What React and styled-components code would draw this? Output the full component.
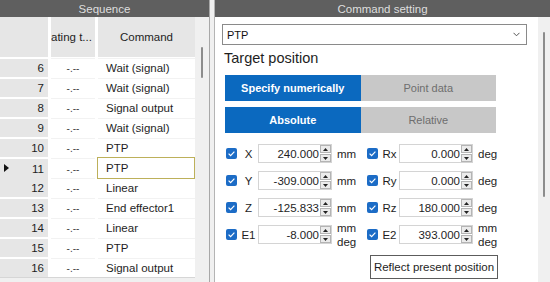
import React from "react";
import styled, { createGlobalStyle } from "styled-components";

const Global = createGlobalStyle`
  html, body {
    margin: 0;
    padding: 0;
    width: 550px;
    height: 282px;
    overflow: hidden;
    background: #f0f0f0;
    font-family: "Liberation Sans", Arial, sans-serif;
    font-size: 11px;
    color: #1e1e1e;
  }
  * { box-sizing: border-box; }
`;

const Root = styled.div`
  display: flex;
  width: 550px;
  height: 282px;
  background: #f0f0f0;
`;

const LeftPanel = styled.div`
  width: 210px;
  display: flex;
  flex-direction: column;
  border-right: 1px solid #a8a8a8;
  background: #fff;
`;

const Divider = styled.div`
  width: 4px;
  display: flex;
  flex-direction: column;
`;

const DividerTop = styled.div`
  height: 17px;
  background: #f0f0f0;
`;

const RightPanel = styled.div`
  flex: 1;
  display: flex;
  flex-direction: column;
  border-left: 1px solid #b4b4b4;
  background: #fff;
`;

const PanelHeader = styled.div`
  height: 17px;
  flex: none;
  background: #5f5f5f;
  color: #dedede;
  font-size: 11.5px;
  display: flex;
  align-items: center;
  justify-content: center;
`;

const TableArea = styled.div`
  flex: 1;
  display: flex;
  min-height: 0;
`;

const Table = styled.div`
  width: 195px;
  display: flex;
  flex-direction: column;
  background: #fff;
  overflow: hidden;
`;

const HeaderRow = styled.div`
  display: grid;
  grid-template-columns: 48px 44px 97px;
  column-gap: 3px;
  height: 40px;
  flex: none;
`;

const HeaderCell = styled.div`
  background: #e6e6e6;
  display: flex;
  align-items: center;
  justify-content: ${(p) => p.$align || "center"};
  font-size: 11.5px;
  color: #1e1e1e;
  overflow: hidden;
  white-space: nowrap;
`;

const Row = styled.div`
  display: grid;
  grid-template-columns: 48px 44px 97px;
  column-gap: 3px;
  height: 20px;
  flex: none;
`;

const NumCell = styled.div`
  margin-top: 2px;
  background: #e6e6e6;
  position: relative;
  display: flex;
  align-items: center;
  justify-content: flex-end;
  padding-right: 4px;
  font-size: 11.5px;
`;

const Marker = styled.span`
  position: absolute;
  left: 4px;
  top: 5px;
  width: 0;
  height: 0;
  border-top: 4px solid transparent;
  border-bottom: 4px solid transparent;
  border-left: 5px solid #111;
`;

const TimeCell = styled.div`
  margin-top: 1px;
  border-top: 1px solid #f2f2f2;
  display: flex;
  align-items: center;
  justify-content: center;
  color: #444;
  font-size: 10px;
`;

const CmdCell = styled.div`
  margin-top: ${(p) => (p.$selected ? "0" : "1px")};
  height: ${(p) => (p.$selected ? "22px" : "auto")};
  border: ${(p) => (p.$selected ? "1px solid #bdb05a" : "none")};
  border-top: ${(p) => (p.$selected ? "1px solid #bdb05a" : "1px solid #f2f2f2")};
  margin-left: ${(p) => (p.$selected ? "-1px" : "0")};
  position: relative;
  z-index: ${(p) => (p.$selected ? 1 : 0)};
  background: #fff;
  display: flex;
  align-items: center;
  padding-left: ${(p) => (p.$selected ? "8px" : "8px")};
  font-size: 11.5px;
  white-space: nowrap;
`;

const Filler = styled.div`
  flex: 1;
  background: #f0f0f0;
  border-top: 1px solid #d6d6d6;
`;

const VScroll = styled.div`
  width: ${(p) => p.$w}px;
  background: #f0f0f0;
  padding-top: ${(p) => p.$top}px;
  display: flex;
  justify-content: center;
`;

const Thumb = styled.div`
  width: 2px;
  height: ${(p) => p.$h}px;
  background: #8c8c8c;
  border-radius: 1px;
`;

const RightBody = styled.div`
  flex: 1;
  display: flex;
  min-height: 0;
`;

const Content = styled.div`
  flex: 1;
  padding: 7px 11px 0 7px;
  display: flex;
  flex-direction: column;
`;

const Select = styled.div`
  height: 21px;
  border: 1px solid #8a8a8a;
  display: flex;
  align-items: center;
  justify-content: space-between;
  padding: 0 6px 0 4px;
  font-size: 11px;
  color: #111;
`;

const Title = styled.div`
  margin: 5px 0 8px 2px;
  font-size: 14.5px;
  line-height: 17px;
  color: #1e1e1e;
`;

const Section = styled.div`
  margin-left: 3px;
  display: flex;
  flex-direction: column;
`;

const Toggle = styled.div`
  display: flex;
  width: 271px;
  height: 26px;
  margin-bottom: ${(p) => p.$mb || 0}px;
`;

const ToggleButton = styled.div`
  flex: 1;
  display: flex;
  align-items: center;
  justify-content: center;
  font-size: 11px;
  font-weight: ${(p) => (p.$active ? "bold" : "normal")};
  background: ${(p) => (p.$active ? "#0b69bf" : "#c8c8c8")};
  color: ${(p) => (p.$active ? "#fff" : "#6e6e6e")};
`;

const Fields = styled.div`
  margin-top: 11px;
  margin-left: 1px;
  display: grid;
  grid-template-columns: 141px 141px;
  row-gap: 8px;
`;

const Field = styled.div`
  display: flex;
  align-items: center;
  height: 19px;
`;

const Label = styled.div`
  width: 17px;
  margin: 0 1px 0 3px;
  text-align: center;
  font-size: 11.5px;
`;

const NumBox = styled.div`
  width: 74px;
  height: 19px;
  border: 1px solid #d4d4d4;
  display: flex;
  align-items: center;
  background: #fff;
`;

const NumText = styled.div`
  flex: 1;
  text-align: right;
  padding-right: 1px;
  font-size: 11.5px;
`;

const Spin = styled.div`
  width: 11px;
  height: 17px;
  display: flex;
  flex-direction: column;
  gap: 1px;
  padding: 0 0 0 0;
`;

const SpinBtn = styled.div`
  flex: 1;
  background: #ebebeb;
  border: 1px solid #b4b4b4;
  display: flex;
  align-items: center;
  justify-content: center;
`;

const Unit = styled.div`
  margin-left: 5px;
  font-size: 11.5px;
  line-height: 14px;
  white-space: pre;
`;

const ActionRow = styled.div`
  margin-top: 11px;
  margin-left: 145px;
`;

const ActionButton = styled.div`
  width: 128px;
  height: 24px;
  border: 1px solid #5c5c5c;
  display: flex;
  align-items: center;
  justify-content: center;
  font-size: 11.5px;
  background: #fff;
`;

const Check = () => (
  <svg width="11" height="11" viewBox="0 0 11 11">
    <rect x="0" y="0" width="11" height="11" rx="2" fill="#1c6cc6" />
    <path d="M2.6 5.6 L4.6 7.6 L8.4 3.6" stroke="#fff" strokeWidth="1.2" fill="none" />
  </svg>
);

const Tri = ({ up }) => (
  <svg width="5" height="3" viewBox="0 0 5 3">
    <path d={up ? "M0 3 L2.5 0 L5 3 Z" : "M0 0 L2.5 3 L5 0 Z"} fill="#222" />
  </svg>
);

const rows = [
  [6, "Wait (signal)"],
  [7, "Wait (signal)"],
  [8, "Signal output"],
  [9, "Wait (signal)"],
  [10, "PTP"],
  [11, "PTP"],
  [12, "Linear"],
  [13, "End effector1"],
  [14, "Linear"],
  [15, "PTP"],
  [16, "Signal output"],
];

const fields = [
  ["X", "240.000", "mm"],
  ["Rx", "0.000", "deg"],
  ["Y", "-309.000", "mm"],
  ["Ry", "0.000", "deg"],
  ["Z", "-125.833", "mm"],
  ["Rz", "180.000", "deg"],
  ["E1", "-8.000", "mm\ndeg"],
  ["E2", "393.000", "mm\ndeg"],
];

export default function App() {
  return (
    <>
      <Global />
      <Root>
        <LeftPanel>
          <PanelHeader>Sequence</PanelHeader>
          <TableArea>
            <Table>
              <HeaderRow>
                <HeaderCell />
                <HeaderCell $align="flex-start">ating t...</HeaderCell>
                <HeaderCell>Command</HeaderCell>
              </HeaderRow>
              {rows.map(([n, cmd]) => (
                <Row key={n}>
                  <NumCell>
                    {n === 11 && <Marker />}
                    {n}
                  </NumCell>
                  <TimeCell>-.--</TimeCell>
                  <CmdCell $selected={n === 11}>{cmd}</CmdCell>
                </Row>
              ))}
              <Filler />
            </Table>
            <VScroll $w={14} $top={30}>
              <Thumb $h={31} />
            </VScroll>
          </TableArea>
        </LeftPanel>
        <Divider>
          <DividerTop />
        </Divider>
        <RightPanel>
          <PanelHeader>Command setting</PanelHeader>
          <RightBody>
            <Content>
              <Select>
                <span>PTP</span>
                <svg width="7" height="5" viewBox="0 0 7 5">
                  <path d="M0.5 0.8 L3.5 3.8 L6.5 0.8" stroke="#555" strokeWidth="1" fill="none" />
                </svg>
              </Select>
              <Title>Target position</Title>
              <Section>
                <Toggle $mb={6}>
                  <ToggleButton $active>Specify numerically</ToggleButton>
                  <ToggleButton>Point data</ToggleButton>
                </Toggle>
                <Toggle>
                  <ToggleButton $active>Absolute</ToggleButton>
                  <ToggleButton>Relative</ToggleButton>
                </Toggle>
                <Fields>
                  {fields.map(([label, value, unit]) => (
                    <Field key={label}>
                      <Check />
                      <Label>{label}</Label>
                      <NumBox>
                        <NumText>{value}</NumText>
                        <Spin>
                          <SpinBtn>
                            <Tri up />
                          </SpinBtn>
                          <SpinBtn>
                            <Tri />
                          </SpinBtn>
                        </Spin>
                      </NumBox>
                      <Unit>{unit}</Unit>
                    </Field>
                  ))}
                </Fields>
                <ActionRow>
                  <ActionButton>Reflect present position</ActionButton>
                </ActionRow>
              </Section>
            </Content>
            <VScroll $w={12} $top={15}>
              <Thumb $h={165} />
            </VScroll>
          </RightBody>
        </RightPanel>
      </Root>
    </>
  );
}
